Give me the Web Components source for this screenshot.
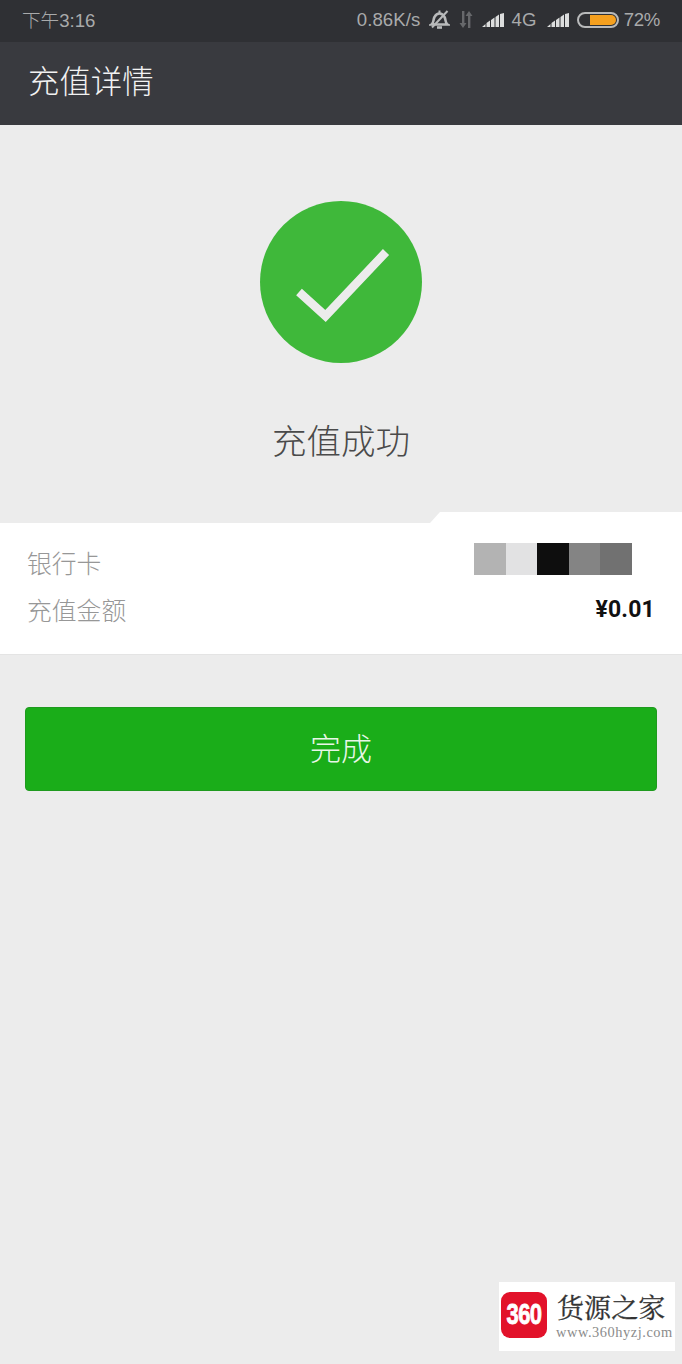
<!DOCTYPE html>
<html lang="zh"><head><meta charset="utf-8">
<style>
html,body{margin:0;padding:0;background:#ececec}
body{width:682px;height:1364px;overflow:hidden;position:relative;font-family:"Noto Sans CJK SC","Liberation Sans",sans-serif}
</style></head><body>
<recharge-app>
<status-bar></status-bar>
<app-bar>充值详情</app-bar>
<success-mark></success-mark>
<success-title>充值成功</success-title>
<detail-panel>
  <detail-row label="银行卡"><pixel-mask></pixel-mask></detail-row>
  <detail-row label="充值金额"><span style="font-family:'Roboto','Liberation Sans',sans-serif;font-weight:700;font-size:23px;color:#111;letter-spacing:.2px;margin-top:1px">¥0.01</span></detail-row>
</detail-panel>
<done-button>完成</done-button>
</recharge-app>
<site-mark></site-mark>
<script>
function def(name,html){customElements.define(name,class extends HTMLElement{constructor(){super();this.attachShadow({mode:'open'}).innerHTML=html}})}
const bars='<path d="M0 14 3.500 11V14zM4.500 14V10L8 7.500V14zM9 14V7L12.500 4.500V14zM13.500 14V4L17 1.500V14zM18 14V1L22 0V14z"/>';
def('recharge-app','<style>:host{display:flex;flex-direction:column;width:682px;height:1364px;background:#ececec}</style><slot></slot>');
def('status-bar',`<style>
:host{display:flex;align-items:center;height:42px;padding:0 22px 3px;box-sizing:border-box;background:#2f3034;color:#a9aaab;font:300 18.600px "Liberation Sans","Noto Sans CJK SC",sans-serif}
.sp{flex:1}.r{display:flex;align-items:center}svg{display:block}
</style>
<span style="margin-top:-2px">下午3:16</span><span class="sp"></span>
<div class="r">
<span style="margin-right:9px;letter-spacing:.1px">0.86K/s</span>
<svg width="21" height="21" viewBox="0 0 21 21" style="margin-right:9px" fill="none" stroke="#b9babb" stroke-width="2.600"><path d="M2.500 15.500c2.500-1.500 1.500-5 3-7.500C6.700 5.800 8.500 4.500 10.500 4.500s3.800 1.300 5 3.500c1.500 2.500.5 6 3 7.500z"/><path d="M8 18.500h5" stroke-width="2.600"/><path d="M10.500 1.500v3" stroke-width="2"/><path d="M3 18.500 18.500 2" stroke-width="2"/></svg>
<svg width="14" height="17" viewBox="0 0 14 17" style="margin-right:9px" fill="#67686b"><path d="M3 0h2.400v12H7.500L4 17 .5 12H3zM9 17h2.400V5h2.100L10 0 6.500 5H9z"/></svg>
<svg width="22" height="14" viewBox="0 0 22 14" style="margin-right:7px" fill="#dcdddd">${bars}</svg>
<span style="margin-right:10px;letter-spacing:.2px">4G</span>
<svg width="22" height="14" viewBox="0 0 22 14" style="margin-right:8px" fill="#dcdddd">${bars}</svg>
<svg width="42" height="16" viewBox="0 0 42 16" style="margin-right:5px"><rect x="1" y="1" width="40" height="14" rx="7" fill="#2f3034" stroke="#b9babb" stroke-width="2"/><path d="M13 3h21a5 5 0 0 1 0 10H13z" fill="#f5a01f"/></svg>
<span style="letter-spacing:-.3px">72%</span>
</div>`);
def('app-bar',`<style>:host{display:flex;align-items:center;height:83px;padding:0 0 9px 28px;box-sizing:border-box;background:#393a3f;color:#f2f2f2;font:300 31.400px "Noto Sans CJK SC",sans-serif}</style><slot></slot>`);
def('success-mark',`<style>:host{display:flex;justify-content:center;padding-top:76px}svg{display:block}</style>
<svg width="162" height="162" viewBox="0 0 162 162"><circle cx="81" cy="81" r="81" fill="#3fb83a"/><path d="M39 91 65.500 115 126 51" fill="none" stroke="#ececec" stroke-width="8.500"/></svg>`);
def('success-title',`<style>:host{display:block;margin-top:49px;height:54px;text-align:center;color:#4a4a4a;font:300 34.500px/54px "Noto Sans CJK SC",sans-serif}</style><slot></slot>`);
def('detail-panel',`<style>:host{display:flex;flex-direction:column;position:relative;margin-top:57px;height:131px;box-sizing:border-box;padding-top:15px;background:#fff;box-shadow:0 1px 0 #e4e4e4}
.bump{position:absolute;right:0;top:-11px;height:11px;width:252px;background:#fff;clip-path:polygon(10px 0,100% 0,100% 100%,0 100%)}</style><span class="bump"></span><slot></slot>`);
customElements.define('detail-row',class extends HTMLElement{constructor(){super();const s=this.attachShadow({mode:'open'});s.innerHTML=`<style>:host{display:flex;align-items:center;justify-content:space-between;height:47px;padding:0 27px 0 27px}
.l{color:#979797;font:300 24.800px "Noto Sans CJK SC",sans-serif}</style><span class="l"></span><slot></slot>`;s.querySelector('.l').textContent=this.getAttribute('label')}});
def('pixel-mask',`<style>:host{display:flex;margin-right:23px;margin-top:-6px}i{display:block;width:31.600px;height:32px}</style>
<i style="background:#b3b3b3"></i><i style="background:#e2e2e3"></i><i style="background:#0e0e0e"></i><i style="background:#848484"></i><i style="background:#717171"></i>`);
def('done-button',`<style>:host{display:flex;align-items:center;justify-content:center;margin:53px 25px 0;height:84px;padding-bottom:6px;box-sizing:border-box;background:#1aad19;border:1px solid #1f9a1f;border-radius:4px;color:#e8f6e8;font:300 31px "Noto Sans CJK SC",sans-serif}</style><slot></slot>`);
def('site-mark',`<style>:host{position:absolute;left:499px;top:1282px;width:176px;height:69px;background:#fff;display:block}
.logo{position:absolute;left:2px;top:10px;width:46px;height:46px;border-radius:9px;background:#e2122a;color:#fff;display:flex;align-items:center;justify-content:center;font:700 22px "Liberation Sans",sans-serif;letter-spacing:-.5px}
.logo span{display:block;transform:scaleY(1.350);-webkit-text-stroke:.6px #fff}
.cn{position:absolute;left:58px;top:7px;font:400 27px/36px "Noto Serif CJK SC","Noto Sans CJK SC",serif;color:#333;white-space:nowrap;letter-spacing:.1px;-webkit-text-stroke:.3px #333}
.url{position:absolute;left:57px;top:42px;font:400 14.400px/16px "Liberation Serif",serif;color:#8b8b8b;white-space:nowrap;letter-spacing:.55px}</style>
<div class="logo"><span>360</span></div><div class="cn">货源之家</div><div class="url">www.360hyzj.com</div>`);
</script>
</body></html>
